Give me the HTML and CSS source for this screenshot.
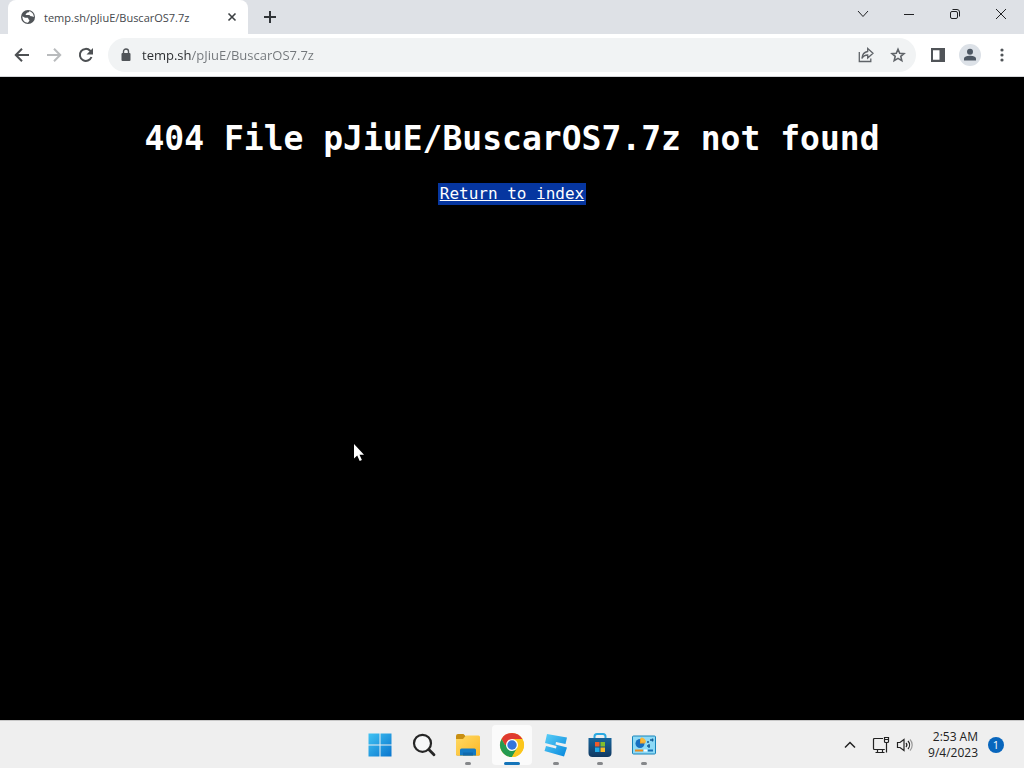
FILE: index.html
```html
<!DOCTYPE html>
<html lang="en">
<head>
    <meta charset="UTF-8">
    <meta name="viewport" content="width=device-width, initial-scale=1.0">
    <title>temp.sh/pJiuE/BuscarOS7.7z</title>
    <link rel="stylesheet" href="styles.css">
</head>
<body>
    <header class="browser">
        <div class="tab-strip">
            <div class="tab">
                <svg class="favicon" width="16" height="16" viewBox="0 0 16 16">
                    <circle cx="8" cy="8" r="7" fill="#505458"/>
                    <path d="M2.4 7.2L5 8.8h2.2c.9 0 1.2.6 1.2 1.3 0 .6.7.6 1 .9.2.6-.6 1.8-1.6 2.7C5 13.800 2.200 11 2.400 7.200z" fill="#fff"/>
                    <path d="M9.300 2.300c-.3 1-1 1.300-1.800 1.300-.8 0-.8 1.300-1.700 1.300-.4.5 0 1.100.7 1.100h2.700c.8 0 .9 1.300 1.700 1.300h1.300c.6 0 .7.800 1.500.8.300-2.800-1.700-5.100-4.400-5.800z" fill="#fff"/>
                </svg>
                <span class="tab-title">temp.sh/pJiuE/BuscarOS7.7z</span>
                <button class="tab-close" aria-label="Close tab">
                    <svg width="16" height="16" viewBox="0 0 16 16"><path d="M4.500 4.500l7 7m0-7l-7 7" stroke="#3c4043" stroke-width="1.600"/></svg>
                </button>
            </div>
            <button class="new-tab" aria-label="New tab">
                <svg width="16" height="16" viewBox="0 0 16 16"><path d="M8 2v12M2 8h12" stroke="#303438" stroke-width="2"/></svg>
            </button>
            <div class="window-buttons">
                <button aria-label="Search tabs"><svg width="16" height="16" viewBox="0 0 16 16"><path d="M3 5l5 5.500L13 5"/></svg></button>
                <button aria-label="Minimize"><svg width="16" height="16" viewBox="0 0 16 16"><path d="M3 8.500h10"/></svg></button>
                <button aria-label="Restore"><svg width="16" height="16" viewBox="0 0 16 16"><rect x="3.500" y="5.500" width="7" height="7" rx="1.500"/><path d="M5.500 3.500H10A2.500 2.500 0 0 1 12.500 6v4.500"/></svg></button>
                <button aria-label="Close"><svg width="16" height="16" viewBox="0 0 16 16"><path d="M3 3l10 10M13 3L3 13"/></svg></button>
            </div>
        </div>

        <div class="toolbar">
            <button class="tool" aria-label="Back">
                <svg width="16" height="16" viewBox="0 0 16 16"><path d="M15 8H2.500M8 1.800L1.800 8 8 14.200" fill="none" stroke="#4d5053" stroke-width="2"/></svg>
            </button>
            <button class="tool" aria-label="Forward">
                <svg width="16" height="16" viewBox="0 0 16 16"><path d="M1 8h12.500M8 1.800L14.200 8 8 14.200" fill="none" stroke="#b9bbbd" stroke-width="2"/></svg>
            </button>
            <button class="tool" aria-label="Reload">
                <svg width="16" height="16" viewBox="0 0 16 16"><path d="M13.500 10A6 6 0 1 1 12.200 3.700L14 5.500" fill="none" stroke="#4d5053" stroke-width="2"/><path d="M15 1v6.500H8.500z" fill="#4d5053"/></svg>
            </button>
            <div class="address-bar">
                <svg width="12" height="14" viewBox="0 0 12 14"><rect x="1.500" y="5" width="9" height="8" rx="1" fill="#505458"/><path d="M3.500 6V3.500a2.500 2.500 0 0 1 5 0V6" fill="none" stroke="#505458" stroke-width="1.400"/></svg>
                <input class="address" type="text" value="temp.sh/pJiuE/BuscarOS7.7z" aria-label="Address">
                <button class="tool" aria-label="Share">
                    <svg width="16" height="16" viewBox="0 0 16 16" fill="none" stroke="#5f6368" stroke-width="1.300"><path d="M1.300 5v9.500h11.500v-3"/><path d="M9.700 1.500l5.300 4.800-5.300 4.700V8C7 8 5.200 9 3.900 11.500 4.200 7.700 6 5 9.700 4.500z"/></svg>
                </button>
                <button class="tool" aria-label="Bookmark this tab">
                    <svg width="16" height="16" viewBox="0 0 16 16"><path d="M8 2.200l1.700 4 4.300.4-3.200 2.800 1 4.200L8 11.400l-3.800 2.200 1-4.200L2 6.600l4.300-.4z" fill="none" stroke="#5f6368" stroke-width="1.600"/></svg>
                </button>
            </div>
            <button class="tool" aria-label="Side panel">
                <svg width="16" height="16" viewBox="0 0 16 16"><path d="M1 1h14v14H1zM3 3.200v9.600h6.500V3.200z" fill="#505458" fill-rule="evenodd"/></svg>
            </button>
            <button class="tool profile" aria-label="Profile">
                <svg width="16" height="16" viewBox="0 0 16 16" fill="#4d5763"><circle cx="8" cy="4.800" r="3"/><path d="M2 13.500v-1.800C2 9.500 5.500 8.700 8 8.700s6 .8 6 3v1.800z"/></svg>
            </button>
            <button class="tool" aria-label="Menu">
                <svg width="16" height="16" viewBox="0 0 16 16" fill="#505458"><circle cx="8" cy="3" r="1.600"/><circle cx="8" cy="8" r="1.600"/><circle cx="8" cy="13" r="1.600"/></svg>
            </button>
        </div>
    </header>

    <main class="page">
        <h1>404 File pJiuE/BuscarOS7.7z not found</h1>
        <a class="index-link" href="/">Return to index</a>
        <svg class="cursor" width="12" height="19" viewBox="0 0 12 19"><path d="M1 1v14.500l3.200-3L6.700 18l2.200-1-2.400-5.300H11z" fill="#fff"/></svg>
    </main>

    <footer class="taskbar">
        <nav class="apps">
            <button class="app" aria-label="Start">
                <svg width="28" height="28" viewBox="0 0 28 28">
                    <defs><linearGradient id="win" gradientUnits="userSpaceOnUse" x1="2" y1="2" x2="26" y2="26"><stop offset="0" stop-color="#42c5f4"/><stop offset="1" stop-color="#0873cd"/></linearGradient></defs>
                    <path d="M2.500 2.500h11v11h-11zM14.500 2.500h11v11h-11zM2.500 14.500h11v11h-11zM14.500 14.500h11v11h-11z" fill="url(#win)"/>
                </svg>
            </button>
            <button class="app" aria-label="Search">
                <svg width="28" height="28" viewBox="0 0 28 28" fill="none" stroke="#262626"><circle cx="12.500" cy="12.300" r="8.500" stroke-width="2.200" fill="#f6f7f8"/><path d="M18.800 18.500l5.200 5.300" stroke-width="2.800" stroke-linecap="round"/></svg>
            </button>
            <button class="app open" aria-label="File Explorer">
                <svg width="28" height="28" viewBox="0 0 28 28">
                    <defs><linearGradient id="folder" x1="0" y1="0" x2="1" y2="1"><stop offset="0" stop-color="#ffda63"/><stop offset="1" stop-color="#fbb829"/></linearGradient></defs>
                    <path d="M2 5q0-2 2-2h5.500l3 3H24q2 0 2 2v15q0 1.500-1.500 1.500h-21Q2 24.500 2 23z" fill="#c88f13"/>
                    <path d="M2 8h7l3-3.500h12.500Q26 4.500 26 6v17q0 1.500-1.500 1.500h-21Q2 24.500 2 23z" fill="url(#folder)"/>
                    <path d="M6 24.500V19q0-1.500 1.500-1.500h13q1.500 0 1.500 1.500v5.500z" fill="#147bc5"/><path d="M9 21.500h10v3H9z" fill="#0f69ad"/>
                </svg>
            </button>
            <button class="app open active" aria-label="Google Chrome">
                <svg width="28" height="28" viewBox="0 0 28 28">
                    <circle cx="14" cy="14" r="12" fill="#fbc61c"/>
                    <path d="M3.600 8A12 12 0 0 1 24.400 8H14v6H7z" fill="#df3a2f"/>
                    <path d="M3.600 8A12 12 0 0 0 14 26l5.200-9-5.200-3H7z" fill="#259b51"/>
                    <path d="M14 8h10.400A12 12 0 0 1 14 26l5.200-9z" fill="#fbc61c"/>
                    <circle cx="14" cy="14" r="6" fill="#fff"/><circle cx="14" cy="14" r="4.700" fill="#3374dc"/>
                </svg>
            </button>
            <button class="app open" aria-label="Roblox Studio">
                <svg width="28" height="28" viewBox="0 0 28 28">
                    <defs><linearGradient id="studio" x1="0" y1="0" x2="1" y2="1"><stop offset="0" stop-color="#5bd0f8"/><stop offset="1" stop-color="#0787dc"/></linearGradient></defs>
                    <path d="M5 3l20 3.500-1.500 6.500-9.500-2-.5 2.500 11.500 3-3 9-19.500-5.500 1.500-5 10 2.500.5-2.500L3 12z" fill="url(#studio)"/>
                </svg>
            </button>
            <button class="app open" aria-label="Microsoft Store">
                <svg width="28" height="28" viewBox="0 0 28 28">
                    <defs><linearGradient id="store" x1="0" y1="0" x2="0" y2="1"><stop offset="0" stop-color="#17659c"/><stop offset="1" stop-color="#123961"/></linearGradient></defs>
                    <path d="M8.500 8V5.500Q8.500 3 11 3h6q2.500 0 2.500 2.500V8" fill="none" stroke="#2baae2" stroke-width="2"/>
                    <path d="M2.500 7h23v15q0 4-4 4h-15q-4 0-4-4z" fill="url(#store)"/>
                    <path d="M9 11h4.500v4.500H9z" fill="#f15b2a"/><path d="M14.500 11H19v4.500h-4.500z" fill="#80bd2d"/><path d="M9 16.500h4.500V21H9z" fill="#20aae7"/><path d="M14.500 16.500H19V21h-4.500z" fill="#fbb923"/>
                </svg>
            </button>
            <button class="app open" aria-label="Control Panel">
                <svg width="28" height="28" viewBox="0 0 28 28">
                    <rect x="2.500" y="5" width="23" height="18" rx="1" fill="#8edaf6" stroke="#1684ba"/>
                    <circle cx="10" cy="12.500" r="4.500" fill="#176fc0"/><path d="M10 12.500V7.500a5 5 0 0 1 5 5z" fill="#ef9e24"/><path d="M11 11.500V6.500a5 5 0 0 1 5 5z" fill="#f7b738"/>
                    <path d="M17 15h3m-1-2v4M20 9h3.500m-1-1.500v3M17 11h2" stroke="#155d98" stroke-width="1.300"/>
                    <path d="M5 19.500h8" stroke="#e78b20" stroke-width="2"/><path d="M14 19.500h3" stroke="#fff" stroke-width="2"/><path d="M18 19.500h5" stroke="#1770b6" stroke-width="2"/>
                </svg>
            </button>
        </nav>
        <div class="tray">
            <button aria-label="Show hidden icons"><svg width="16" height="16" viewBox="0 0 16 16" fill="none" stroke="#222" stroke-width="1.500"><path d="M3 10.500l5-5 5 5"/></svg></button>
            <button class="status" aria-label="Network and volume">
                <svg width="18" height="18" viewBox="0 0 18 18" fill="none" stroke="#222" stroke-width="1.200"><path d="M11 2.500H2.500Q1.500 2.500 1.500 3.500v9q0 1 1 1h10.300M5.500 13.500v3M10.500 13.500v3M3.500 16.500h9"/><path d="M12.500 1.500h4v4q0 1-1 1h-2q-1 0-1-1zM14.500 6.500v10M12.500 3.500h4"/></svg>
                <svg width="18" height="18" viewBox="0 0 18 18" fill="none" stroke="#222" stroke-width="1.200"><path d="M1.500 6.500H4l4-3v11l-4-3H1.500z"/><path d="M10 7a3 3 0 0 1 0 4M12 5a6 6 0 0 1 0 8"/><path d="M14 3.500a8 8 0 0 1 0 11" stroke="#999"/></svg>
            </button>
            <time class="clock" datetime="2023-09-04T02:53"><span>2:53 AM</span><span>9/4/2023</span></time>
            <span class="badge">1</span>
        </div>
    </footer>
</body>
</html>
```
FILE: styles.css
```css
* {
    box-sizing: border-box;
}

body {
    margin: 0;
    min-height: 100vh;
    display: flex;
    flex-direction: column;
    background-color: #000;
    font-family: "Open Sans", "Noto Sans", sans-serif;
    font-size: 11px;
}

button {
    display: flex;
    align-items: center;
    justify-content: center;
    padding: 0;
    border: none;
    background: none;
}

svg {
    display: block;
    flex-shrink: 0;
}

/* Browser window */
.browser {
    background-color: #fff;
    border-bottom: 1px solid #d5d7da;
}

.tab-strip {
    display: flex;
    height: 34px;
    padding-left: 8px;
    background-color: #dee1e6;
}

.tab {
    display: flex;
    align-items: center;
    width: 240px;
    padding: 0 8px 0 12px;
    gap: 8px;
    border-radius: 8px 8px 0 0;
    background-color: #fff;
    color: #45484c;
}

.tab-title {
    flex: 1;
    white-space: nowrap;
}

.new-tab {
    width: 28px;
    margin-left: 8px;
}

.window-buttons {
    display: flex;
    margin-left: auto;
    padding-bottom: 6px;
}

.window-buttons button {
    width: 46px;
}

.window-buttons svg {
    fill: none;
    stroke: #202124;
}

.toolbar {
    display: flex;
    align-items: center;
    height: 42px;
    padding: 0 8px;
    gap: 4px;
}

.tool {
    width: 28px;
    height: 28px;
}

.address-bar {
    display: flex;
    align-items: center;
    flex: 1;
    height: 34px;
    margin: 0 4px;
    padding: 0 4px 0 12px;
    gap: 4px;
    border-radius: 17px;
    background-color: #f1f3f4;
}

/* Host is darker than the path */
.address {
    flex: 1;
    min-width: 0;
    margin-left: 6px;
    padding: 0;
    border: none;
    outline: none;
    font: 13px "Open Sans", "Noto Sans", sans-serif;
    color: transparent;
    background: linear-gradient(to right, #292b2e 49px, #72767a 49px);
    -webkit-background-clip: text;
    background-clip: text;
}

.profile {
    width: 22px;
    height: 22px;
    margin: 0 3px;
    border-radius: 50%;
    background-color: #dce1e7;
}

/* Error page */
.page {
    position: relative;
    flex: 1;
    padding-top: 42px;
    text-align: center;
    font-family: "DejaVu Sans Mono", monospace;
    color: #fff;
}

h1 {
    margin: 0 0 24px;
    font-size: 33px;
    line-height: 40px;
}

.index-link {
    display: inline-block;
    padding: 0 2px;
    font-size: 16px;
    line-height: 22px;
    color: #fff;
    background-color: #0636a0;
}

.cursor {
    position: absolute;
    top: 366px;
    left: 353px;
}

/* Taskbar */
.taskbar {
    display: grid;
    grid-template-columns: 1fr auto 1fr;
    align-items: center;
    height: 48px;
    border-top: 1px solid #c8c8c8;
    background-color: #efefef;
}

.apps {
    display: flex;
    grid-column: 2;
    gap: 4px;
}

.app {
    position: relative;
    width: 40px;
    height: 40px;
    border-radius: 4px;
}

.app.active {
    background-color: #fbfbfb;
}

.app.open::after {
    content: "";
    position: absolute;
    bottom: 0;
    width: 6px;
    height: 3px;
    border-radius: 2px;
    background-color: #85878a;
}

.app.active::after {
    width: 16px;
    background-color: #1474b9;
}

.tray {
    display: flex;
    grid-column: 3;
    align-items: center;
    justify-content: flex-end;
    padding-right: 20px;
    gap: 14px;
}

.status {
    gap: 6px;
}

.clock {
    display: flex;
    flex-direction: column;
    text-align: right;
    font-size: 12px;
    line-height: 16px;
    color: #222;
}

.badge {
    width: 16px;
    margin-left: -4px;
    border-radius: 50%;
    background-color: #0866bd;
    color: #fff;
    line-height: 16px;
    text-align: center;
}
```
